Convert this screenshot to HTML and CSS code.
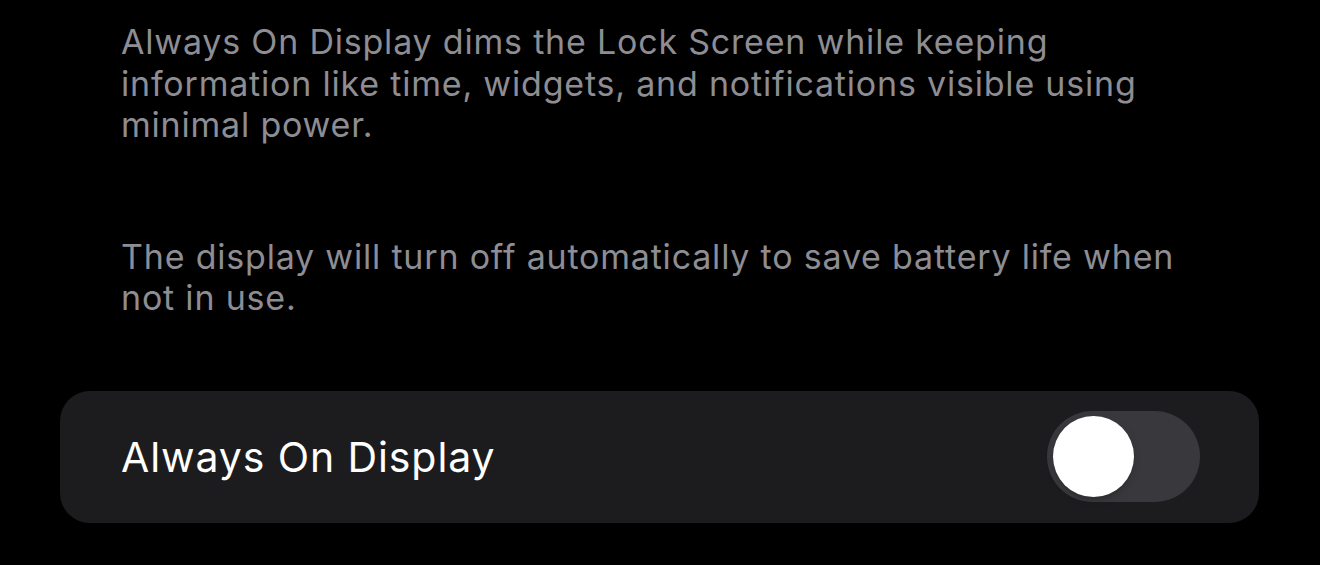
FILE: index.html
```html
<!DOCTYPE html>
<html lang="en">
<head>
  <meta charset="UTF-8">
  <meta name="viewport" content="width=device-width, initial-scale=1.0">
  <title>Always On Display</title>
  <link rel="stylesheet" href="styles.css">
</head>
<body>
  <div class="page">
    <div class="footer-text">
      <p>Always On Display dims the Lock Screen while keeping information like time, widgets, and notifications visible using minimal power.</p>
      <p>The display will turn off automatically to save battery life when not in use.</p>
    </div>

    <div class="group">
      <div class="row">
        <span class="row-label">Always On Display</span>
        <div class="switch" role="switch" aria-checked="false">
          <div class="knob"></div>
        </div>
      </div>
    </div>
  </div>
</body>
</html>
```

FILE: styles.css
```css
:root {
  --bg: #000000;
  --cell: #1c1c1e;
  --secondary: #8d8d93;
  --track: #39393d;
  --white: #ffffff;
  --radius: 30px;
}
* {
  box-sizing: border-box;
  margin: 0;
  padding: 0;
}
body {
  font-family: 'Inter', 'Noto Sans', sans-serif;
  background-color: var(--bg);
  color: var(--white);
}
.page {
  padding: 21px 61px 0 60px;
}
.footer-text {
  padding-left: 61px;
  max-width: 1146px;
  color: var(--secondary);
  font-size: 34px;
  letter-spacing: 0.8px;
  line-height: 41.5px;
}
.footer-text p + p {
  margin-top: 90px;
}
.group {
  margin-top: 72px;
  background-color: var(--cell);
  border-radius: var(--radius);
}
.row {
  height: 132px;
  display: flex;
  align-items: center;
  justify-content: space-between;
  padding: 0 59px 0 61px;
}
.row-label {
  font-size: 41px;
  letter-spacing: 0.9px;
}
.switch {
  width: 153px;
  height: 91px;
  border-radius: 46px;
  background-color: var(--track);
  padding: 5px 6px;
  display: flex;
  align-items: center;
}
.knob {
  width: 81px;
  height: 81px;
  border-radius: 50%;
  background-color: var(--white);
  box-shadow: 0 3px 8px rgba(0, 0, 0, 0.15), 0 3px 1px rgba(0, 0, 0, 0.06);
}
```
